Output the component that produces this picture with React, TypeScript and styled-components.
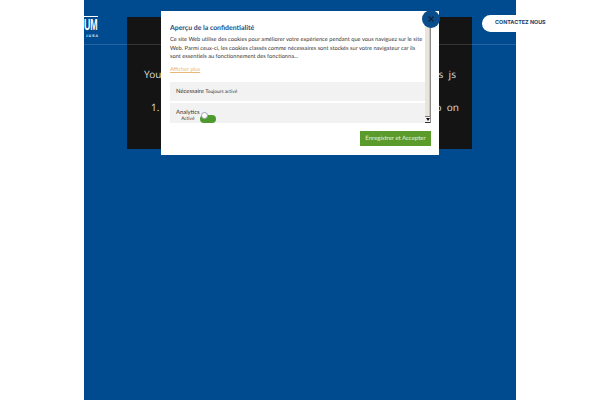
import styled, { createGlobalStyle } from "styled-components";

const GlobalStyle = createGlobalStyle`
  html, body { margin: 0; padding: 0; background: #fff; overflow: hidden; }
  body { font-family: Lato, "Noto Sans", sans-serif; text-rendering: geometricPrecision; }
`;

export default function App() {
  return (
    <>
      <GlobalStyle />
      <Page>
        <Column>
          <Header>
            <Logo>
              <LogoWord>UM</LogoWord>
              <LogoSub>JURA</LogoSub>
            </Logo>
            <ContactButton>CONTACTEZ NOUS</ContactButton>
          </Header>
          <ErrorBox>
            <ErrorLine>You have enabled cookies and scripts for this website, files js</ErrorLine>
            <ErrorLine $indented>1. Set your browser preferences to allow all the scripts to on</ErrorLine>
          </ErrorBox>
        </Column>
      </Page>
      <Modal>
        <CloseButton aria-label="Fermer">
          <svg width="8" height="8" viewBox="0 0 8 8">
            <path d="M1.5 1.5l5 5M6.5 1.5l-5 5" stroke="#10243a" strokeWidth="1.2" fill="none" />
          </svg>
        </CloseButton>
        <ModalBody>
          <Scroll>
            <ModalTitle>Aperçu de la confidentialité</ModalTitle>
            <ModalText>
              Ce site Web utilise des cookies pour améliorer votre expérience pendant que vous naviguez sur le site
              <br />
              Web. Parmi ceux-ci, les cookies classés comme nécessaires sont stockés sur votre navigateur car ils
              <br />
              sont essentiels au fonctionnement des fonctionna...
            </ModalText>
            <MoreLink>Afficher plus</MoreLink>
            <Row>
              <RowLabel>Nécessaire</RowLabel>
              <RowHint>Toujours activé</RowHint>
            </Row>
            <Row $toggle>
              <ToggleLabels>
                <RowLabel>Analytics</RowLabel>
                <RowHint>Activé</RowHint>
              </ToggleLabels>
              <Toggle>
                <Knob />
              </Toggle>
            </Row>
          </Scroll>
          <Scrollbar>
            <ScrollTrack />
            <ScrollArrow>
              <svg width="4" height="3" viewBox="0 0 4 3">
                <path d="M0 0h4L2 3z" fill="#111" />
              </svg>
            </ScrollArrow>
          </Scrollbar>
        </ModalBody>
        <ModalFooter>
          <AcceptButton>Enregistrer et Accepter</AcceptButton>
        </ModalFooter>
      </Modal>
    </>
  );
}

const Page = styled.div`
  width: 600px;
  height: 400px;
  padding-left: 84px;
  box-sizing: border-box;
  overflow: hidden;
`;

const Column = styled.div`
  position: relative;
  width: 432px;
  height: 400px;
  background: #004a8f;
  padding: 17px 44px 0 43px;
  box-sizing: border-box;
`;

const Header = styled.header`
  position: absolute;
  top: 0;
  left: 0;
  width: 100%;
  height: 45px;
  border-bottom: 1px solid rgba(255, 255, 255, 0.14);
  box-sizing: border-box;
  display: flex;
  align-items: flex-start;
  justify-content: space-between;
`;

const Logo = styled.div`
  margin-top: 16px;
  width: 14px;
  border-top: 1px solid #fff;
  color: #fff;
  display: flex;
  flex-direction: column;
`;

const LogoWord = styled.span`
  padding-top: 1px;
  font-family: "Liberation Sans", sans-serif;
  font-size: 16px;
  font-weight: 700;
  line-height: 15px;
  transform: scaleX(0.55);
  transform-origin: left center;
`;

const LogoSub = styled.span`
  padding-left: 2px;
  font-size: 3.6px;
  font-weight: 700;
  line-height: 6px;
  letter-spacing: 1px;
  white-space: nowrap;
`;

const ContactButton = styled.a`
  margin-top: 15px;
  margin-right: -122px;
  width: 156px;
  height: 17px;
  padding-left: 13px;
  box-sizing: border-box;
  border-radius: 9px;
  background: #fff;
  color: #123e6b;
  font-family: Inter, sans-serif;
  font-size: 5.4px;
  font-weight: 700;
  line-height: 17px;
  white-space: nowrap;
`;

const ErrorBox = styled.section`
  width: 345px;
  height: 132px;
  background: #141414;
  color: #d6d6d6;
  padding: 50px 0 0 17px;
  box-sizing: border-box;
  overflow: hidden;
`;

const ErrorLine = styled.p<{ $indented?: boolean }>`
  width: ${(props) => (props.$indented ? "308px" : "312px")};
  margin: 0 0 19px ${(props) => (props.$indented ? "7px" : "0")};
  font-family: "Noto Sans", sans-serif;
  font-size: 10px;
  line-height: 14px;
  text-align-last: justify;
`;

const Modal = styled.div`
  position: fixed;
  left: 161px;
  top: 11px;
  width: 278px;
  height: 144px;
  background: #fff;
  box-sizing: border-box;
  padding: 9px 8px 8px 9px;
  display: flex;
  flex-direction: column;
`;

const CloseButton = styled.div`
  position: absolute;
  top: -1px;
  right: -1px;
  width: 18px;
  height: 18px;
  border-radius: 50%;
  background: #0a4d8c;
  display: flex;
  align-items: center;
  justify-content: center;
  z-index: 2;
`;

const ModalBody = styled.div`
  display: flex;
  height: 103px;
`;

const Scroll = styled.div`
  flex: 1;
  min-width: 0;
  overflow: hidden;
  padding-top: 3px;
  box-sizing: border-box;
`;

const ModalTitle = styled.h4`
  margin: 0;
  color: #1c4d80;
  font-size: 6.9px;
  font-weight: 700;
  line-height: 10px;
`;

const ModalText = styled.p`
  margin: 3.4px 0 0;
  color: #333;
  font-size: 5.7px;
  line-height: 8.3px;
  white-space: nowrap;
`;

const MoreLink = styled.a`
  display: block;
  margin-top: 5px;
  color: #e8b77a;
  font-size: 5.5px;
  line-height: 8px;
  text-decoration: underline;
`;

const Row = styled.div<{ $toggle?: boolean }>`
  margin-top: ${(props) => (props.$toggle ? "2px" : "8px")};
  height: ${(props) => (props.$toggle ? "20px" : "19px")};
  background: #f2f2f2;
  padding-left: 6px;
  display: flex;
  align-items: ${(props) => (props.$toggle ? "flex-start" : "center")};
  gap: ${(props) => (props.$toggle ? "0" : "1.5px")};
`;

const ToggleLabels = styled.div`
  display: flex;
  flex-direction: column;
  align-items: center;
  margin-top: 6px;
`;

const RowLabel = styled.span`
  color: #333;
  font-size: 5.9px;
  line-height: 7px;
`;

const RowHint = styled.span`
  color: #333;
  font-size: 4.8px;
  line-height: 6px;
`;

const Toggle = styled.div`
  position: relative;
  margin-top: 12px;
  width: 16px;
  height: 8px;
  border-radius: 4px;
  background: #4f9a2e;
`;

const Knob = styled.span`
  position: absolute;
  left: 1px;
  top: -3px;
  width: 7px;
  height: 7px;
  box-sizing: border-box;
  border-radius: 50%;
  background: #fff;
  border: 1px solid #9aa5b0;
`;

const Scrollbar = styled.div`
  width: 6px;
  display: flex;
  flex-direction: column;
  border-right: 1px solid #8a8a8a;
  box-sizing: border-box;
`;

const ScrollTrack = styled.div`
  flex: 1;
  background: #e9e4dc;
  border-right: 1px solid #c9c3ba;
`;

const ScrollArrow = styled.div`
  height: 7px;
  background: #f2f2f2;
  border-top: 1px solid #777;
  border-bottom: 1px solid #333;
  box-sizing: border-box;
  display: flex;
  align-items: center;
  justify-content: center;
`;

const ModalFooter = styled.div`
  display: flex;
  justify-content: flex-end;
  margin-top: 8px;
`;

const AcceptButton = styled.div`
  width: 71px;
  height: 15px;
  background: #5a9b2c;
  color: #e8f0df;
  font-size: 6px;
  line-height: 15px;
  text-align: center;
`;
